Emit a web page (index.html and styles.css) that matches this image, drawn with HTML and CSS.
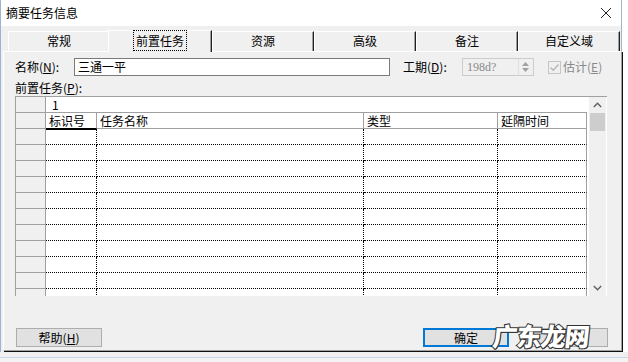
FILE: index.html
```html
<!DOCTYPE html>
<html lang="zh-CN">
<head>
    <meta charset="UTF-8">
    <title>摘要任务信息</title>
    <link rel="stylesheet" href="styles.css">
</head>
<body>

<div class="window">
    <div class="titlebar">
        <span class="title">摘要任务信息</span>
        <svg class="close" width="12" height="12" viewBox="0 0 12 12">
            <path d="M1 1L11 11M11 1L1 11" stroke="#222" stroke-width="1" fill="none"/>
        </svg>
    </div>

    <div class="tabctl">
        <!-- tab strip -->
        <div class="tabs">
            <div class="tab">常规</div>
            <div class="tab active"><span class="focus">前置任务</span></div>
            <div class="tab">资源</div>
            <div class="tab">高级</div>
            <div class="tab">备注</div>
            <div class="tab">自定义域</div>
        </div>

        <div class="panel">
            <!-- name / duration -->
            <div class="name-row">
                <label class="lbl">名称(<u>N</u>):</label>
                <div class="textbox name-box">三通一平</div>
                <label class="lbl dur-lbl">工期(<u>D</u>):</label>
                <div class="textbox dur-box">
                    <span class="dur-val">198d?</span>
                    <span class="spin">
                        <svg width="7" height="4" viewBox="0 0 7 4"><path d="M0 4L3.5 0L7 4Z" fill="#a0a0a0"/></svg>
                        <svg width="7" height="4" viewBox="0 0 7 4"><path d="M0 0L3.5 4L7 0Z" fill="#a0a0a0"/></svg>
                    </span>
                </div>
                <span class="check">
                    <svg width="11" height="11" viewBox="0 0 11 11"><path d="M1.5 5.5L4.2 8.2L9.5 2.5" stroke="#b5b5b5" stroke-width="1.3" fill="none"/></svg>
                </span>
                <span class="est">估计(<u>E</u>)</span>
            </div>

            <div class="pred-lbl">前置任务(<u>P</u>):</div>

            <!-- predecessors sheet -->
            <div class="grid-box">
                <div class="sheet" id="sheet">
                    <div class="rh"></div>
                    <div class="edit">1</div>

                    <div class="rh"></div>
                    <div class="hd hd-sel">标识号</div>
                    <div class="hd">任务名称</div>
                    <div class="hd">类型</div>
                    <div class="hd last">延隔时间</div>
                </div>
                <div class="vscroll">
                    <div class="arrow">
                        <svg width="9" height="6" viewBox="0 0 9 6"><path d="M0.8 5L4.5 1.3L8.2 5" stroke="#606060" stroke-width="1.4" fill="none"/></svg>
                    </div>
                    <div class="thumb"></div>
                    <div class="track"></div>
                    <div class="arrow">
                        <svg width="9" height="6" viewBox="0 0 9 6"><path d="M0.8 1L4.5 4.7L8.2 1" stroke="#606060" stroke-width="1.4" fill="none"/></svg>
                    </div>
                </div>
            </div>

            <!-- buttons -->
            <div class="buttons">
                <button class="btn">帮助(<u>H</u>)</button>
                <button class="btn default">确定</button>
                <button class="btn">取消</button>
                <div class="watermark">广东龙网</div>
            </div>
        </div>
    </div>
</div>
<div class="under"></div>

<script>
    // empty predecessor rows
    let sheet = document.getElementById("sheet");
    for (let i = 0; i < 11; i++) {
        let html = '<div class="rh"></div>';
        html += '<div class="c"></div><div class="c"></div><div class="c"></div><div class="c last"></div>';
        sheet.insertAdjacentHTML("beforeend", html);
    }
</script>

</body>
</html>
```

FILE: styles.css
```css
body {
    margin: 0;
    width: 628px;
    height: 362px;
    overflow: hidden;
    background-color: #fff;
    font-family: "Noto Sans CJK SC", "Liberation Sans", sans-serif;
    font-size: 12px;
    line-height: 14px;
    color: #000;
}
u {
    text-decoration: underline;
    text-underline-offset: 1px;
}
.window {
    width: 622px;
    height: 352px;
    background-color: #f0f0f0;
    border-left: 1px solid #9db4d3;
    border-right: 1px solid #9db4d3;
    box-sizing: border-box;
}
.titlebar {
    height: 26px;
    background-color: #fff;
    display: flex;
    align-items: center;
    justify-content: space-between;
    padding: 0 9px 0 5px;
}
.title {
    font-size: 12px;
}

/* tabs */
.tabctl {
    margin: 4px 0 0 2px;
    width: 619px;
}
.tabs {
    display: flex;
    align-items: flex-start;
    height: 21px;
    padding-left: 5px;
}
.tab {
    position: relative;
    box-sizing: border-box;
    width: 102px;
    height: 20px;
    margin-top: 1px;
    border-top: 1px solid #fff;
    border-left: 1px solid #fff;
    border-right: 1px solid #202020;
    box-shadow: inset -1px 0 0 #a0a0a0;
    text-align: center;
    line-height: 18px;
}
.tab.active {
    z-index: 1;
    width: 104px;
    height: 22px;
    margin-top: 0;
    margin-left: -2px;
    background-color: #f0f0f0;
    line-height: 20px;
}
.focus {
    outline: 1px dotted #000;
    padding: 1px 2px;
}
.panel {
    box-sizing: border-box;
    height: 300px;
    border-top: 1px solid #fff;
    border-left: 1px solid #fff;
    border-right: 1px solid #a0a0a0;
    border-bottom: 1px solid #a0a0a0;
    box-shadow: 1px 1px 0 #101010;
    padding: 6px 13px 0 11px;
}

/* name row */
.name-row {
    display: flex;
    align-items: center;
    height: 18px;
}
.lbl {
    width: 59px;
    flex: none;
}
.dur-lbl {
    margin-left: 13px;
}
.textbox {
    box-sizing: border-box;
    height: 18px;
    border: 1px solid #7a7a7a;
    background-color: #fff;
    padding-left: 3px;
    line-height: 16px;
}
.name-box {
    width: 316px;
}
.dur-box {
    width: 72px;
    display: flex;
    justify-content: space-between;
    border-color: #cccccc;
    background-color: #f0f0f0;
    padding: 0 1px 0 4px;
}
.dur-val {
    font-family: "Liberation Serif", serif;
    color: #8a8a8a;
}
.spin {
    width: 13px;
    display: flex;
    flex-direction: column;
    align-items: center;
    justify-content: center;
    gap: 2px;
    border-left: 1px solid #e0e0e0;
}
.check {
    box-sizing: border-box;
    width: 13px;
    height: 13px;
    margin-left: 14px;
    border: 1px solid #c5c5c5;
    display: flex;
    align-items: center;
    justify-content: center;
}
.est {
    margin-left: 2px;
    color: #8a8a8a;
}
.pred-lbl {
    margin-top: 5px;
}

/* sheet */
.grid-box {
    box-sizing: border-box;
    width: 592px;
    height: 200px;
    margin-top: 1px;
    border-top: 1px solid #a0a0a0;
    background-color: #fff;
    display: flex;
    overflow: hidden;
}
.sheet {
    box-sizing: border-box;
    width: 572px;
    height: 199px;
    border-left: 1px solid #a0a0a0;
    display: grid;
    grid-template-columns: 30px 51px 267px 134px 89px;
    grid-auto-rows: 16px;
    align-content: start;
    overflow: hidden;
}
.sheet > div {
    box-sizing: border-box;
}
.rh {
    background-color: #f0f0f0;
    border-right: 1px solid #a0a0a0;
    border-bottom: 1px solid #a0a0a0;
}
.edit {
    grid-column: span 4;
    border-bottom: 1px solid #a0a0a0;
    padding-left: 6px;
    line-height: 15px;
}
.hd {
    border-right: 1px solid #a0a0a0;
    border-bottom: 1px solid #a0a0a0;
    padding-left: 3px;
    line-height: 15px;
}
.hd-sel {
    border-bottom-color: #000;
    box-shadow: 0 1px 0 #000;
}
.c {
    border-right: 1px dotted #000;
    border-bottom: 1px dotted #000;
}
.c.last {
    border-right: 1px solid #a0a0a0;
}
.hd.last {
    border-right: 1px solid #a0a0a0;
}
.vscroll {
    width: 17px;
    margin-left: 2px;
    display: flex;
    flex-direction: column;
    background-color: #f0f0f0;
}
.arrow {
    height: 16px;
    display: flex;
    align-items: center;
    justify-content: center;
}
.thumb {
    height: 18px;
    margin: 0 1px;
    background-color: #cdcdcd;
}
.track {
    flex: 1;
}

/* buttons */
.buttons {
    position: relative;
    display: flex;
    gap: 13px;
    margin-top: 32px;
    padding-left: 1px;
}
.btn {
    box-sizing: border-box;
    width: 86px;
    height: 19px;
    padding: 0;
    border: 1px solid #adadad;
    background-color: #e1e1e1;
    font-family: inherit;
    font-size: 12px;
    line-height: 15px;
    color: #000;
}
.btn.default {
    margin-left: auto;
    border-color: #0078d7;
    box-shadow: inset 0 0 0 1px #0078d7;
}
.watermark {
    position: absolute;
    left: 478px;
    top: -8px;
    font-size: 25px;
    line-height: 30px;
    font-weight: 900;
    letter-spacing: -1px;
    color: #fff;
    -webkit-text-stroke: 2px #333;
    paint-order: stroke fill;
    text-shadow: 1px 1px 0 #333;
    transform: skewX(-6deg);
}
.under {
    height: 10px;
    background-color: #f3f3f3;
    border-top: 5px solid #f0f0f0;
    box-shadow: inset 0 1px 0 #c8d8ec;
}
```
